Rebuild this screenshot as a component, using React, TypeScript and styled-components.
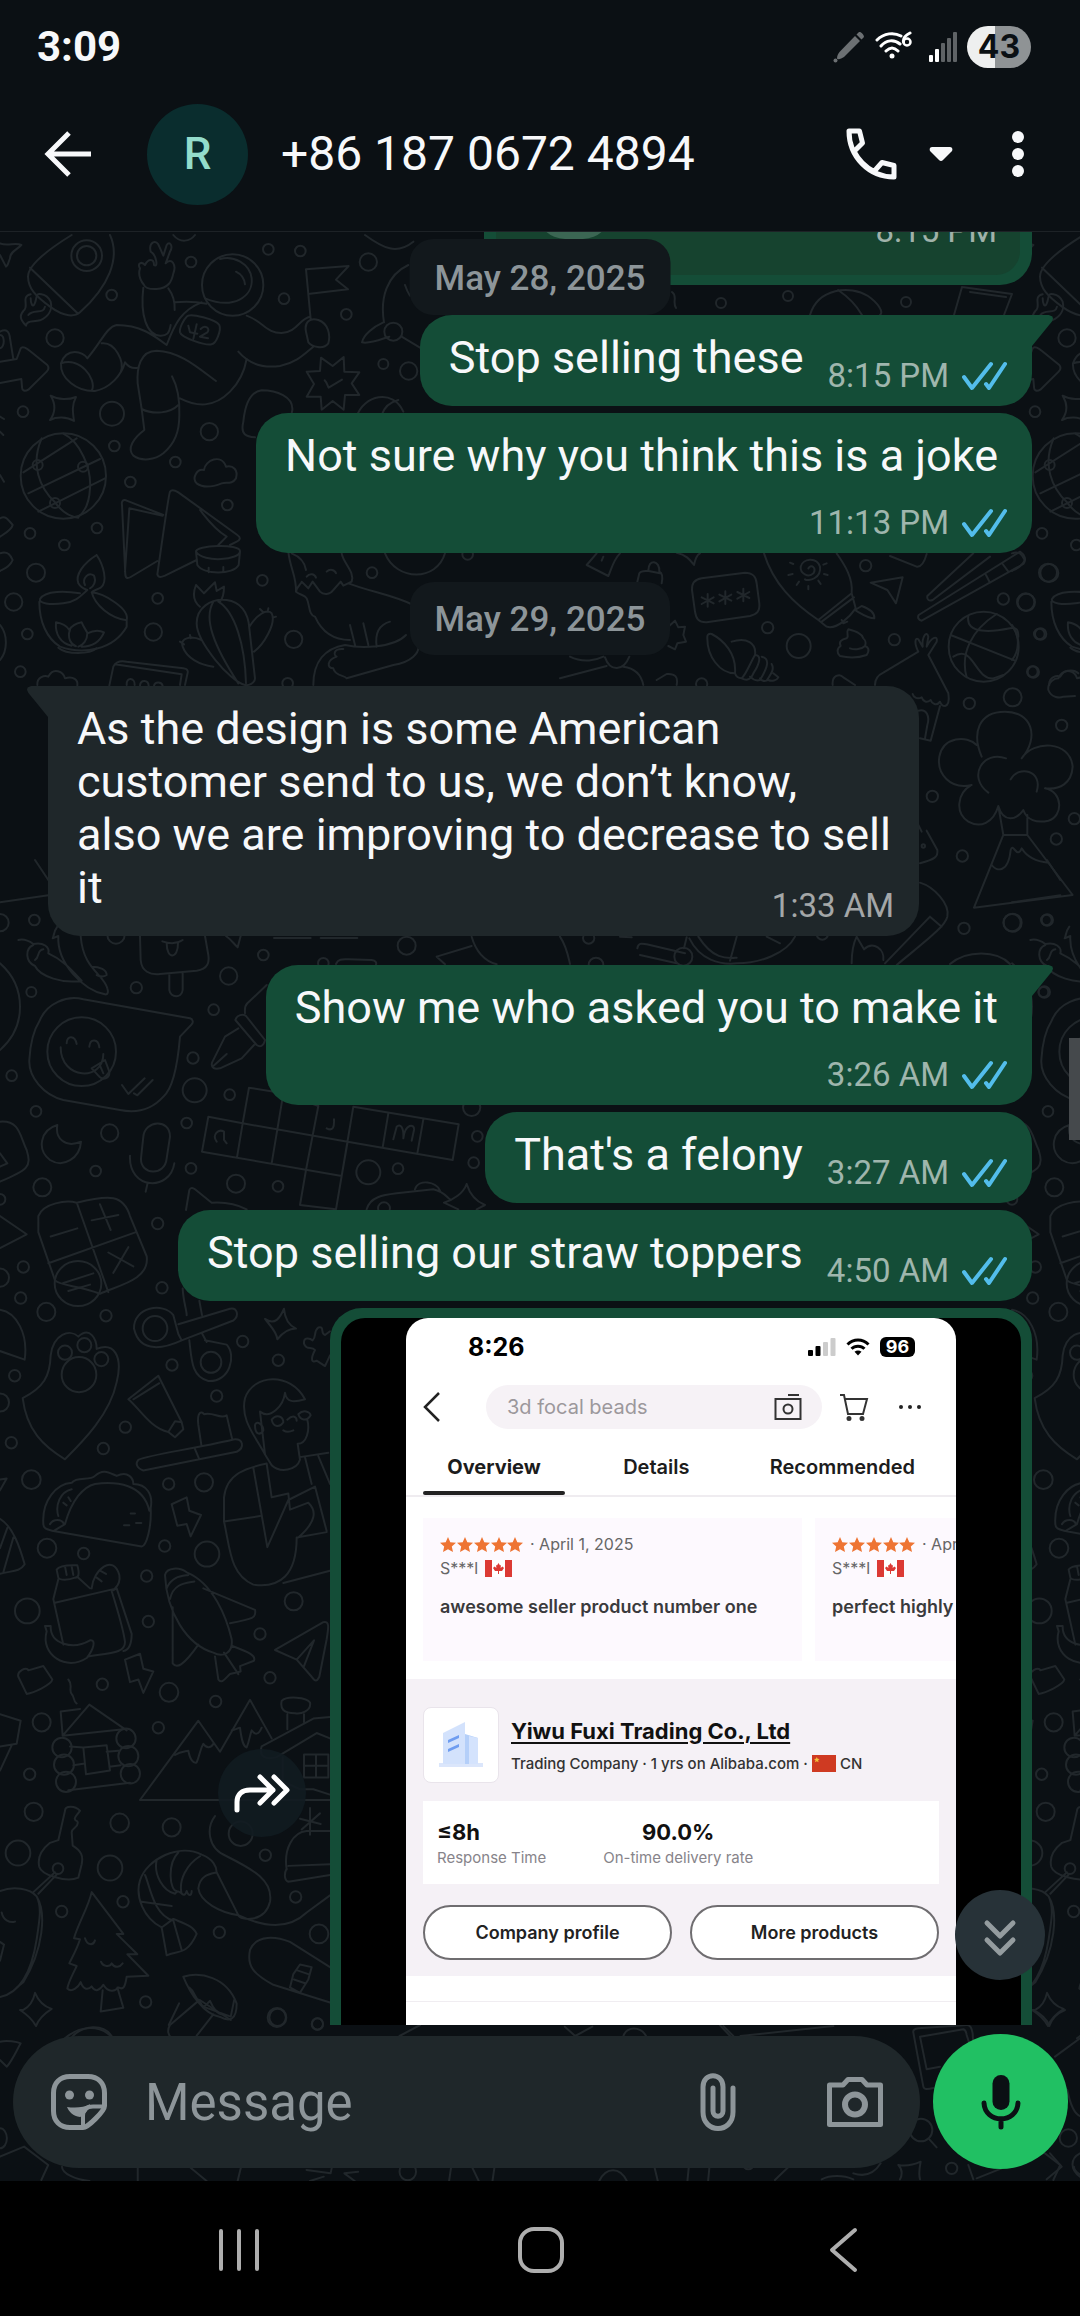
import React from "react";
import styled, { createGlobalStyle, css } from "styled-components";

const color = {
  base: "#0b1014",
  doodle: "#21272b",
  sent: "#144d37",
  sentInner: "#16432f",
  received: "#1f272a",
  chip: "#12181c",
  text: "#f7f8fa",
  muted: "#8d9599",
  accent: "#21c063",
  tick: "#53bdeb",
};

const GlobalStyle = createGlobalStyle`
  * { box-sizing: border-box; }
  body { margin: 0; background: #000; font-family: Roboto, "Noto Sans", sans-serif; }
  button, input { font: inherit; color: inherit; border: 0; padding: 0; background: none; outline: none; }
  svg { display: block; flex: none; }
  p { margin: 0; }
`;

const Screen = styled.div`
  display: flex;
  flex-direction: column;
  height: 100vh;
  background: ${color.base};
  color: ${color.text};
  overflow: hidden;
`;

const StatusBar = styled.div`
  flex: none;
  display: flex;
  align-items: center;
  height: 94px;
  padding: 0 49px 0 37px;
`;
const Clock = styled.time`
  flex: 1;
  font-size: 42px;
  font-weight: 700;
  line-height: 48px;
`;
const StatusIcons = styled.div`
  display: flex;
  align-items: center;
  gap: 10px;
`;
const Battery = styled.span`
  display: flex;
  align-items: center;
  justify-content: center;
  width: 64px;
  height: 42px;
  border-radius: 21px;
  background: linear-gradient(90deg, #eeefef 43%, #8f9395 43%);
  color: ${color.base};
  font: 700 32px/42px Inter, sans-serif;
`;

const Header = styled.header`
  flex: none;
  display: flex;
  align-items: center;
  height: 138px;
  padding: 0 42px 17px 38px;
  border-bottom: 1px solid #1d2226;
`;
const IconButton = styled.button<{ $w: number; $h?: number }>`
  flex: none;
  display: flex;
  align-items: center;
  justify-content: center;
  width: ${(p) => p.$w}px;
  height: ${(p) => p.$h ?? 60}px;
`;
const Avatar = styled.div`
  display: flex;
  align-items: center;
  justify-content: center;
  width: 101px;
  height: 101px;
  margin: 0 33px 0 49px;
  border-radius: 50%;
  background: #0a2d2e;
  color: #93dccb;
  font-size: 44px;
  font-weight: 500;
`;
const Title = styled.h1`
  flex: 1;
  margin: 0;
  font-size: 48px;
  font-weight: 400;
  line-height: 58px;
  white-space: nowrap;
`;
const HeaderActions = styled.div`
  display: flex;
  align-items: center;
  gap: 20px;
  & > :last-child { margin-left: 17px; }
`;

const Chat = styled.main`
  position: relative;
  flex: 1;
  min-height: 0;
  display: flex;
  flex-direction: column;
  isolation: isolate;
`;
const WallpaperSvg = styled.svg`
  position: absolute;
  inset: 0;
  width: 100%;
  height: 100%;
  z-index: -1;
  fill: none;
  stroke: ${color.doodle};
  stroke-width: 2;
  stroke-linecap: round;
  stroke-linejoin: round;
  path, circle, ellipse, rect { vector-effect: non-scaling-stroke; }
`;
const MessageList = styled.section`
  flex: 1;
  min-height: 0;
  overflow: hidden;
  display: flex;
  flex-direction: column;
  padding: 0 48px;
`;

const Bubble = styled.article<{ $from: "me" | "them"; $tail?: boolean; $inline?: boolean }>`
  position: relative;
  flex: none;
  display: flex;
  flex-direction: ${(p) => (p.$inline ? "row" : "column")};
  align-self: ${(p) => (p.$from === "me" ? "flex-end" : "flex-start")};
  align-items: flex-end;
  max-width: 871px;
  padding: 16px 25px ${(p) => (p.$inline ? 22 : 11)}px 29px;
  border-radius: 32px;
  background: ${(p) => (p.$from === "me" ? color.sent : color.received)};
  & + & { margin-top: 7px; }
  ${(p) =>
    p.$tail &&
    css`
      border-top-${p.$from === "me" ? "right" : "left"}-radius: 0;
      &::before {
        content: "";
        position: absolute;
        top: 0;
        ${p.$from === "me" ? "left" : "right"}: 100%;
        width: 21px;
        height: 31px;
        background: inherit;
        clip-path: ${p.$from === "me"
          ? "polygon(0 0, 80% 0, 97% 5%, 100% 12%, 94% 22%, 0 100%)"
          : "polygon(100% 0, 20% 0, 3% 5%, 0 12%, 6% 22%, 100% 100%)"};
      }
    `}
`;
const BubbleText = styled.p<{ $place: "inline" | "below" | "overlap" }>`
  align-self: flex-start;
  margin-right: ${(p) => ({ inline: 24, below: 9, overlap: 0 })[p.$place]}px;
  font-size: 45px;
  line-height: 53px;
  white-space: pre-line;
`;
const Meta = styled.footer<{ $place: "inline" | "below" | "overlap" }>`
  display: flex;
  align-items: center;
  gap: 12px;
  margin-top: ${(p) => ({ inline: 0, below: 21, overlap: -28 })[p.$place]}px;
  margin-bottom: ${(p) => (p.$place === "inline" ? -11 : 0)}px;
  font-size: 33px;
  line-height: 39px;
  white-space: nowrap;
  color: rgba(255, 255, 255, 0.6);
`;

const CutBubble = styled(Bubble)`
  width: 548px;
  height: 120px;
  margin: -67px 0 23px;
  padding: 10px 12px;
  align-items: stretch;
`;
const CutPreview = styled.div`
  flex: 1;
  display: flex;
  justify-content: space-between;
  align-items: center;
  padding: 6px 23px 6px 41px;
  border-radius: 24px;
  background: ${color.sentInner};
`;
const CutDot = styled.span`
  align-self: flex-start;
  width: 74px;
  height: 74px;
  margin-top: -16px;
  border-radius: 28px;
  background: #3b6653;
`;

const DateChip = styled.div<{ $floating?: boolean }>`
  flex: none;
  align-self: center;
  height: 73px;
  margin: 29px 0 31px;
  padding: 0 25px;
  border-radius: 24px;
  background: ${color.chip};
  color: ${color.muted};
  font-size: 35px;
  font-weight: 500;
  line-height: 76px;
  white-space: nowrap;
  ${(p) =>
    p.$floating &&
    css`
      position: absolute;
      top: 7px;
      left: 50%;
      margin: 0;
      height: 76px;
      line-height: 80px;
      transform: translateX(-50%);
      z-index: 1;
    `}
`;
const Gap = styled.div`
  flex: none;
  height: 29px;
`;

const PhotoRow = styled.div`
  flex: none;
  display: flex;
  justify-content: flex-end;
  align-items: center;
  gap: 24px;
  margin-top: 7px;
`;
const ForwardButton = styled.button`
  display: flex;
  align-items: center;
  justify-content: center;
  width: 88px;
  height: 88px;
  border-radius: 50%;
  background: rgba(17, 27, 33, 0.88);
`;
const PhotoBubble = styled.div`
  width: 702px;
  height: 970px;
  padding: 10px 11px;
  border-radius: 32px;
  background: ${color.sent};
`;
const Photo = styled.div`
  display: flex;
  justify-content: center;
  height: 100%;
  border-radius: 24px;
  overflow: hidden;
  background: #000;
  padding: 0 65px;
`;
const Shot = styled.div`
  flex: 1;
  min-width: 0;
  display: flex;
  flex-direction: column;
  overflow: hidden;
  border-radius: 22px 22px 0 0;
  background: #fff;
  color: #222;
  font-family: Inter, "Liberation Sans", sans-serif;
`;
const ShotStatus = styled.div`
  display: flex;
  align-items: center;
  gap: 10px;
  height: 58px;
  padding: 0 41px 0 62px;
`;
const ShotClock = styled.b`
  flex: 1;
  font-size: 25px;
  font-weight: 700;
  color: #000;
`;
const ShotBattery = styled.span`
  width: 35px;
  height: 20px;
  border-radius: 6px;
  background: #000;
  color: #fff;
  text-align: center;
  font-size: 18px;
  font-weight: 700;
  line-height: 20px;
`;
const ShotSearchRow = styled.div`
  display: flex;
  align-items: center;
  margin-top: 9px;
  padding: 0 34px 0 17px;
`;
const ShotSearch = styled.label`
  flex: 1;
  min-width: 0;
  display: flex;
  align-items: center;
  height: 44px;
  margin: 0 17px 0 45px;
  padding: 0 20px 0 21px;
  border-radius: 22px;
  background: #f6f2f6;
  input {
    flex: 1;
    min-width: 0;
    font-size: 20px;
    color: #9c989c;
  }
  input::placeholder { color: #9c989c; opacity: 1; }
`;
const ShotMore = styled(IconButton)`
  margin-left: 29px;
`;
const ShotTabs = styled.nav`
  flex: none;
  display: flex;
  justify-content: space-between;
  height: 68px;
  padding: 26px 25px 0 17px;
  border-bottom: 2px solid #efecf0;
`;
const ShotTab = styled.button<{ $active?: boolean }>`
  display: flex;
  flex-direction: column;
  justify-content: space-between;
  align-items: center;
  min-width: ${(p) => (p.$active ? 142 : 110)}px;
  padding: 0 ${(p) => (p.$active ? 0 : 16)}px;
  &:last-child { padding: 0 16px 0 22px; }
  font-size: 20px;
  font-weight: ${(p) => (p.$active ? 700 : 600)};
  line-height: 24px;
  color: #1c1c1c;
  &::after {
    content: "";
    width: 100%;
    height: 4px;
    border-radius: 2px;
    background: ${(p) => (p.$active ? "#222" : "transparent")};
  }
`;
const Reviews = styled.div`
  display: flex;
  gap: 13px;
  margin: 21px 0 18px 17px;
`;
const Review = styled.article`
  flex: none;
  width: 379px;
  height: 143px;
  padding: 16px 17px;
  background: #fdf9fe;
  white-space: nowrap;
`;
const ReviewLine = styled.div`
  display: flex;
  align-items: center;
  gap: 7px;
  height: 20px;
  margin-bottom: 4px;
  font-size: 16px;
  line-height: 20px;
  color: #666;
`;
const ReviewText = styled.p`
  margin-top: 17px;
  font-size: 18px;
  font-weight: 600;
  line-height: 24px;
  color: #3a3a3c;
`;
const Company = styled.section`
  flex: none;
  height: 297px;
  padding: 28px 17px 0;
  background: #f5f1f6;
`;
const CompanyHead = styled.div`
  display: flex;
  align-items: center;
  gap: 12px;
`;
const CompanyLogo = styled.div`
  display: flex;
  align-items: center;
  justify-content: center;
  width: 76px;
  height: 76px;
  border: 1px solid #e9e4eb;
  border-radius: 8px;
  background: #fff;
`;
const CompanyName = styled.a`
  display: block;
  margin-bottom: 9px;
  font-size: 22px;
  font-weight: 700;
  line-height: 28px;
  color: #111;
  text-decoration: underline;
  text-decoration-thickness: 2px;
  text-underline-offset: 3px;
`;
const CompanyInfo = styled.div`
  display: flex;
  align-items: center;
  gap: 4px;
  font-size: 15px;
  font-weight: 500;
  line-height: 20px;
  white-space: nowrap;
  color: #333;
`;
const Stats = styled.div`
  display: flex;
  gap: 57px;
  height: 83px;
  margin-top: 18px;
  padding: 19px 14px 0;
  background: #fff;
`;
const Stat = styled.div<{ $center?: boolean }>`
  text-align: ${(p) => (p.$center ? "center" : "left")};
  font-size: 15px;
  line-height: 20px;
  color: #87848a;
  b {
    display: block;
    margin-bottom: 4px;
    font-size: 22px;
    line-height: 24px;
    color: #111;
  }
`;
const CompanyButtons = styled.div`
  display: grid;
  grid-template-columns: 1fr 1fr;
  gap: 18px;
  margin-top: 21px;
  button {
    height: 55px;
    border: 2px solid #6f6d70;
    border-radius: 28px;
    background: #fff;
    font-size: 18px;
    font-weight: 600;
    color: #222;
  }
`;
const ShotRule = styled.hr`
  width: 100%;
  margin: 25px 0 0;
  border: 0;
  border-top: 1px solid #f0edf1;
`;

const ScrollThumb = styled.div`
  position: absolute;
  top: 806px;
  right: 0;
  width: 11px;
  height: 102px;
  background: #45494c;
`;
const JumpButton = styled.button`
  position: absolute;
  right: 35px;
  bottom: 201px;
  display: flex;
  align-items: center;
  justify-content: center;
  width: 90px;
  height: 90px;
  border-radius: 50%;
  background: #273238;
  && { padding-top: 6px; }
`;

const Composer = styled.form`
  flex: none;
  display: flex;
  align-items: center;
  gap: 13px;
  padding: 9px 12px 12px 13px;
`;
const ComposerField = styled.div`
  flex: 1;
  min-width: 0;
  display: flex;
  align-items: center;
  height: 132px;
  padding: 0 36px 0 37px;
  border-radius: 66px;
  background: ${color.received};
  color: ${color.muted};
  & > :last-child { margin-left: 79px; }
`;
const ComposerInput = styled.input`
  flex: 1;
  min-width: 0;
  margin-left: 37px;
  font-size: 51px;
  line-height: 60px;
  && { padding: 3px 0 0; }
  &::placeholder { color: ${color.muted}; opacity: 1; }
`;
const MicButton = styled.button`
  display: flex;
  align-items: center;
  justify-content: center;
  width: 135px;
  height: 135px;
  border-radius: 50%;
  background: ${color.accent};
  color: ${color.base};
`;

const SystemNav = styled.nav`
  flex: none;
  display: flex;
  align-items: center;
  justify-content: space-between;
  height: 135px;
  padding: 2px 207px 0 209px;
  background: #000;
  color: #aeaeae;
`;

function Ticks() {
  return (
    <svg width="46" height="30" viewBox="0 0 46 30" fill="none" stroke={color.tick} strokeWidth="4" strokeLinecap="round" strokeLinejoin="round" aria-label="Read">
      <path d="M3 16L11 27L30 3M25 23L28 27L44 3" />
    </svg>
  );
}

function Message({ from = "me", text, time, tail, place = "inline" }: {
  from?: "me" | "them";
  text: string;
  time: string;
  tail?: boolean;
  place?: "inline" | "below" | "overlap";
}) {
  return (
    <Bubble $from={from} $tail={tail} $inline={place === "inline"}>
      <BubbleText $place={place}>{text}</BubbleText>
      <Meta $place={place}>
        <time>{time}</time>
        {from === "me" && <Ticks />}
      </Meta>
    </Bubble>
  );
}

type Dot = [number, number, number];
const Dots = ({ list, sy = 1 }: { list: Dot[]; sy?: number }) => (
  <>
    {list.map(([x, y, r], i) => (
      <ellipse key={i} cx={x} cy={y} rx={r} ry={r * sy} />
    ))}
  </>
);

const spaceDots: Dot[] = [
  [260, 62, 46], [260, 62, 29], [573, 81, 16], [805, 43, 16], [901, 48, 16], [1105, 81, 26], [852, 191, 16],
  [1039, 238, 16], [335, 180, 16], [165, 309, 26], [1150, 387, 15], [1226, 408, 26], [69, 530, 16], [336, 536, 36],
  [628, 590, 26], [343, 633, 16], [526, 681, 16], [391, 741, 16], [682, 810, 16], [90, 895, 16], [291, 879, 16],
  [193, 930, 16], [108, 1013, 27], [41, 1101, 26], [473, 1090, 16], [787, 1036, 16], [82, 1197, 16],
  [460, 1191, 26], [881, 1213, 26], [1116, 1013, 16], [61, 1310, 16], [863, 1345, 16], [1403, 958, 16],
  [698, 150, 92], [190, 723, 128], [113, 690, 15], [249, 695, 15], [165, 804, 15], [1180, 290, 27],
];
const chatDots: Dot[] = [
  [0, 188, 26], [103, 180, 16], [94, 396, 15], [409, 383, 17], [686, 348, 26], [790, 285, 16], [641, 449, 16],
  [348, 225, 26], [579, 594, 17], [35, 647, 16], [584, 691, 36], [689, 704, 16], [108, 754, 16], [329, 819, 26],
  [560, 789, 16], [287, 933, 16], [573, 925, 16], [708, 971, 27], [834, 979, 16], [1105, 937, 36],
  [1194, 926, 16], [127, 982, 27], [0, 1018, 16], [1415, 742, 26], [1432, 829, 16], [1421, 908, 16],
  [1220, 257, 27], [245, 575, 103], [970, 310, 16], [1152, 1045, 18],
];
const campDots: Dot[] = [
  [473, 44, 17], [70, 125, 17], [62, 183, 17], [139, 209, 27], [318, 216, 17], [486, 164, 17], [44, 328, 17],
  [0, 145, 27], [0, 378, 27], [34, 453, 17], [376, 424, 17], [310, 464, 17], [94, 522, 28], [516, 308, 17],
  [728, 264, 17], [835, 299, 17], [650, 366, 17], [506, 530, 17], [612, 527, 27], [141, 650, 28], [251, 660, 17],
  [494, 646, 17], [621, 661, 37], [440, 702, 17], [445, 787, 17], [82, 767, 37], [881, 749, 27], [780, 810, 17],
  [810, 892, 17], [307, 904, 17], [507, 919, 28], [647, 936, 17], [125, 975, 27], [475, 985, 17], [89, 1072, 17],
  [101, 1142, 27], [54, 1219, 37], [359, 1163, 28], [330, 1247, 37], [515, 1171, 27], [722, 1183, 36],
  [796, 1223, 17], [887, 1301, 17], [185, 1328, 17], [369, 1310, 17], [658, 1367, 17], [957, 1370, 28],
  [437, 1497, 17], [831, 1526, 28], [952, 1538, 17], [195, 285, 21], [253, 271, 21], [304, 297, 21],
  [237, 326, 52], [465, 240, 37], [633, 303, 31], [186, 1022, 29], [192, 1054, 30], [198, 1086, 30],
  [378, 1005, 29], [385, 1038, 30], [391, 1071, 29], [174, 1248, 16],
];
const beachDots: Dot[] = [
  [917, 77, 17], [1468, 99, 27], [1330, 177, 17], [1399, 187, 26], [623, 263, 17], [716, 318, 36], [1003, 299, 17],
  [1442, 282, 17], [1420, 396, 17], [1228, 490, 17], [1358, 472, 27], [1505, 556, 17], [1117, 769, 17],
  [1543, 836, 17], [1489, 897, 17], [1207, 948, 17], [1212, 1165, 17], [1358, 1148, 27], [1462, 1140, 17],
  [1453, 1356, 17], [86, 1194, 17], [108, 1275, 22], [787, 1182, 17], [370, 1250, 27], [425, 432, 17],
  [1271, 320, 105], [1090, 918, 5],
];
const bottomDots: Dot[] = [[1285, 384, 26], [935, 475, 17], [843, 360, 34], [325, 462, 16]];

function LeftDoodles() {
  return (
    <g id="doodle-column">
      <g transform="translate(0 235) scale(0.33333)">
        <Dots list={spaceDots} />
        <path d="M330 0C362 70 325 155 240 232C225 245 195 248 150 215C105 182 85 160 84 125C84 90 150 40 215 0M90 98L232 234" />
        <path d="M92 178C60 185 90 215 70 228C55 245 65 258 78 272C80 255 100 262 120 256C145 245 158 225 152 200C146 188 135 180 125 178C105 172 112 190 104 206C98 220 92 205 92 190M85 240C100 220 130 240 135 215" />
        <path d="M0 25C25 35 45 20 64 30C50 45 30 50 30 70C25 80 25 92 18 95L0 60" />
        <path d="M0 380L50 372L62 340C68 332 80 340 90 348L142 390C148 398 146 404 140 410L85 464C75 470 65 468 66 455L64 432L0 444M0 290C20 280 28 290 30 310L40 372M0 340C15 335 15 300 0 300" />
        <path d="M432 150C420 135 415 115 420 100C410 85 425 78 435 90C445 70 462 70 462 90C475 100 470 60 452 50C445 20 470 10 478 35L490 62L500 30C510 15 520 35 510 50L497 85C515 65 530 90 520 115C515 140 505 160 470 162C450 163 435 158 432 150Z" />
        <path d="M430 158C420 240 440 300 480 302C500 303 508 295 512 270M505 160C520 180 525 200 524 225M524 202C560 198 600 202 620 206M615 190C700 225 760 185 755 130C750 85 700 60 660 72M708 110C725 118 733 130 735 148M605 202C545 225 525 265 500 330C460 300 420 270 350 270C320 275 305 320 262 370C250 350 200 335 183 385C180 430 230 470 285 468C330 460 365 420 375 382C385 395 400 402 415 398M183 385C240 365 290 430 276 466M305 325C345 320 375 380 362 412" />
        <path d="M740 242C790 260 800 295 845 294C890 292 900 250 930 245M715 350C745 385 790 400 840 393C890 383 915 355 940 335M932 252L918 103L1046 93L1008 134L1044 163L930 176M918 290C912 260 930 248 955 255C985 265 992 300 985 325C970 345 935 335 925 322Z" />
        <path d="M648 438C590 395 540 350 470 347C420 347 410 400 413 445L425 522L433 585C400 610 380 640 400 662C425 680 465 675 490 655C525 625 538 590 538 540C540 480 530 450 516 424M425 522C460 540 510 535 535 510M540 490C590 515 640 520 690 470C720 440 735 400 740 372" />
        <path d="M560 245C570 232 650 255 658 270C664 285 650 325 635 328C615 332 545 308 540 292C537 280 552 252 560 245Z" />
        <path d="M920 410L960 408L963 368L998 393L1031 366L1033 410L1078 412L1055 445L1078 480L1035 480L1031 524L998 498L965 524L962 485L920 485L942 447ZM974 436C980 442 982 450 986 458L1026 434" />
        <path d="M152 482C175 495 205 495 228 486C215 510 218 530 222 558C200 545 170 545 150 555C168 530 168 508 152 482Z" />
        <path d="M730 560C735 510 750 470 785 466C830 466 880 485 877 525L870 560M730 560C720 600 740 605 765 607M1070 545C1090 480 1180 460 1210 530M1145 540C1155 510 1175 500 1195 495" />
        <path d="M125 610C90 690 120 760 165 802C185 830 205 845 235 848M190 596C240 620 275 700 270 760C268 800 255 830 235 846M70 712L230 610M85 775L300 672M115 830L315 730" />
        <path d="M590 745C575 730 590 700 612 705C615 675 665 655 678 695C700 690 715 705 708 730C695 750 680 740 665 745C640 755 610 760 590 745Z" />
        <path d="M490 840L378 796C368 793 364 800 366 810L376 1020C378 1032 385 1030 392 1026L472 978M388 820L375 1010M388 820L488 842M510 770C505 780 475 1000 472 1018C475 1030 485 1026 495 1022L590 975M510 770C515 762 525 766 535 772L712 900C724 908 720 915 710 920L690 930M600 825C620 850 640 880 680 905L655 930" />
        <path d="M588 950C585 930 720 925 720 948C722 975 610 985 588 950ZM588 950L592 990C610 1020 700 1020 716 990L720 950M626 998V1012M670 996V1010" />
        <path d="M290 960C250 985 225 1020 235 1045C245 1062 255 1062 262 1065C245 1080 230 1100 190 1105C150 1110 115 1105 120 1092C135 1065 200 1068 240 1075M290 960C310 990 325 1040 302 1058C290 1065 280 1065 275 1072C285 1110 330 1150 380 1156M380 1156C390 1120 310 1075 275 1072M118 1100C118 1160 140 1210 180 1235C250 1260 340 1245 380 1175V1156M255 1050C245 1030 265 1010 282 1022C290 1040 280 1055 270 1060" />
        <path d="M215 1232C180 1225 165 1195 168 1162C185 1165 200 1172 208 1185C215 1172 230 1165 245 1162C252 1180 262 1190 262 1195C280 1186 300 1186 312 1192C300 1220 275 1235 245 1235M210 1185C200 1210 215 1230 228 1234M262 1195C262 1215 250 1230 235 1235M175 1238C200 1260 270 1258 290 1240" />
        <path d="M600 1115C575 1095 580 1070 588 1050L612 1075L645 1042L650 1068L672 1055C672 1080 668 1090 660 1100M735 1350C690 1340 590 1220 590 1165C590 1120 630 1090 680 1095C720 1100 745 1130 748 1180L765 1330C765 1345 745 1352 735 1350ZM640 1100C610 1150 640 1230 715 1345M655 1100C705 1130 735 1230 738 1345M748 1175C770 1140 800 1120 815 1135C830 1165 790 1230 762 1250M605 1215C570 1200 540 1210 548 1235C560 1270 600 1290 640 1295M540 1220L552 1228M570 1200L572 1210M780 1122L790 1132M805 1120L803 1130M828 1145L818 1148" />
        <path d="M112 1350C110 1325 135 1320 145 1325C160 1295 190 1310 195 1330C220 1322 235 1335 232 1352M328 1352L340 1295C350 1275 370 1278 380 1280L550 1300C565 1302 565 1310 562 1318L555 1350M345 1288L545 1318L540 1350M380 1350C378 1325 405 1328 404 1350M420 1352C422 1332 445 1335 446 1352M462 1352C465 1338 485 1340 488 1352" />
        <path d="M865 950C870 1000 890 1025 888 1070C900 1080 915 1080 920 1090C930 1110 925 1140 945 1145C965 1190 1000 1215 1050 1215M875 955C900 965 915 985 918 1005M888 1070C890 1055 905 1045 905 1040L925 1060L938 1040L960 1070C970 1080 990 1080 1000 1065L1022 1040L1030 1052L1055 1040C1065 1010 1030 985 1025 955M920 1025C930 1012 945 1018 948 1028M980 1010C990 1000 1005 1005 1008 1015M1045 1045C1110 1070 1180 1080 1240 1110M1050 1170L1065 1230M1090 1165L1105 1230M1170 1160C1135 1170 1125 1200 1130 1235M940 1350C940 1280 975 1240 1035 1230C1080 1240 1180 1240 1218 1200M1030 1242C1000 1240 1000 1260 1010 1265C980 1275 980 1300 1000 1300C1005 1325 1035 1320 1040 1330L1180 1290C1240 1280 1255 1250 1255 1240M1155 955C1190 1040 1310 1040 1335 955" />
        <path d="M1225 90C1160 120 1140 190 1152 262M1150 262C1120 275 1090 300 1086 322C1110 328 1150 310 1168 305M1205 305L1260 338M1215 150C1220 165 1225 175 1230 182M1095 0C1150 40 1190 60 1240 20M520 0C540 25 570 20 585 0" />
        <path d="M0 850C15 842 22 850 38 870C35 885 15 895 0 905M0 955C20 948 30 955 38 975C30 995 15 1000 0 1008M0 545L12 552M0 590L10 600M0 1170C25 1200 22 1250 0 1275M0 720L12 740M565 272L570 292L592 296M590 268L580 312M602 282C615 268 632 280 622 292L600 305L624 310" />
      </g>
      <g transform="translate(0 860) scale(0.33333)">
        <Dots list={chatDots} />
        <path d="M0 127L145 106M105 0L145 60M0 310C80 380 80 500 0 570" />
        <path d="M55 240C75 235 90 245 100 252C130 245 150 262 145 280C190 300 215 330 245 362C190 372 120 350 105 318C75 305 75 265 100 255M130 268C110 270 120 290 105 300M172 200C160 215 162 230 158 235L175 228C170 310 250 390 315 403C325 405 325 395 322 385C310 340 250 330 242 228M275 320C300 320 320 330 320 345C310 352 300 350 290 345" />
        <path d="M420 228L422 300C425 335 450 345 480 342L590 332C625 328 628 305 625 285L615 228M508 340V390C512 415 545 415 548 390V338M487 244C510 252 530 252 548 240M500 250C500 300 535 298 534 248M678 228C695 240 700 250 713 262L722 228" />
        <path d="M120 480C140 430 200 405 250 418L570 475C580 478 580 488 575 493L540 530C535 590 525 680 490 710C450 755 400 758 360 750L190 720C130 705 85 650 88 600C90 560 95 520 120 480ZM182 562C182 660 310 665 310 582M200 550C200 525 225 525 230 552M268 560C270 535 295 535 298 562M275 625L315 600L328 635C330 655 310 660 300 652ZM300 617L310 640M366 675L385 702L434 655M402 700L412 706L458 660" />
        <path d="M800 375L742 430C732 440 735 450 735 460M706 480C710 465 730 460 738 468L795 540C790 560 780 562 770 555ZM715 505L675 530L636 608C632 625 645 628 660 625L725 595L762 555M640 618L680 582" />
        <path d="M172 795C120 810 110 870 150 900C190 925 240 895 243 845C195 865 165 835 172 795ZM430 830C435 780 510 775 510 830L500 895C495 950 420 945 423 895ZM390 887C385 990 510 995 523 910M443 968L437 995M0 785C60 780 60 830 80 870C95 920 85 930 0 965M0 880L22 910L0 920" />
        <path d="M747 683L728 790L625 770L606 875L1025 948L1043 845L1358 900L1376 793L1060 740M747 683L850 700L815 910M728 790L1043 845M728 790L711 892M955 738L918 930M1060 740L1025 948L1008 1048M918 930L900 1035L1008 1048M1165 760L1148 862M1270 778L1252 880M850 700L955 738" />
        <path d="M558 1050L568 990C572 980 580 984 585 988L635 1028C680 1025 715 1035 740 1048M1100 1048C1110 1010 1150 1005 1190 1000L1300 988C1330 995 1340 1010 1350 1018M1245 988C1255 955 1310 965 1320 992M1400 972C1390 1000 1360 1020 1332 1028L1375 1048M1400 972C1410 1005 1430 1025 1455 1035L1430 1048" />
        <path d="M650 845C635 825 655 805 672 815V840L680 850M980 805C1000 815 1003 800 1002 778M1180 838L1190 800C1200 790 1212 800 1210 835C1215 790 1245 790 1242 810L1235 842M1008 312C1015 295 1030 298 1045 298L1115 300C1128 302 1130 308 1128 314M1310 290L1415 258M1415 230C1425 265 1445 300 1490 313M1310 290L1335 313M822 234H932M962 234H1072" />
      </g>
      <g transform="translate(0 1200) scale(0.33333 0.5357)">
        <Dots list={campDots} sy={0.63} />
        <path d="M115 30C130 5 200 0 230 5C330 -10 370 -10 390 30L440 105C450 150 350 160 300 175C240 160 180 160 165 150L115 60ZM232 8L325 172M145 118L408 60M152 68L232 53M275 38L355 28M300 8L332 56M325 98L400 124M340 136L385 88M190 155L280 137M205 170L270 158" />
        <ellipse cx="234" cy="156" rx="70" ry="42" />
        <path d="M0 30L80 64L0 90M0 205C50 210 85 250 74 298L0 282M195 484C130 460 80 430 68 370C130 350 150 330 152 290C160 250 210 240 235 255C270 235 290 260 290 278C340 265 370 290 350 340C330 400 250 450 195 484Z" />
        <path d="M548 165C550 190 560 205 560 215M598 188L606 215M545 262C500 275 420 290 402 240C400 200 490 190 520 215L535 250L545 262L700 225C720 215 710 200 690 203L535 232M568 262C575 300 575 330 625 338C690 340 710 290 680 270L615 262M605 248L620 265M385 372L475 328L545 415L550 428L525 443L505 433C450 425 420 390 385 372ZM400 372L478 342M505 433L525 413L545 415" />
        <path d="M415 485C450 475 580 465 700 447C730 445 735 462 710 470L430 505C410 500 405 492 415 485ZM585 465L598 484M604 457L595 420C590 395 605 393 612 400C640 395 660 410 680 402L696 445" />
        <path d="M795 475L780 395C810 410 850 385 855 360C860 378 880 378 915 372C870 320 760 325 735 370C720 410 765 440 795 475L815 495C840 510 890 505 900 485L893 455C920 455 930 430 922 410M765 420C770 410 790 420 790 430C780 440 765 438 765 420ZM815 410C830 398 850 405 850 415C840 425 820 425 815 410ZM862 410C880 400 890 405 890 412M895 400C910 390 930 395 932 402C920 415 900 410 895 400ZM850 430C860 434 870 433 880 430M800 492C740 500 680 510 672 555V600L780 590M672 600C690 650 690 700 760 718C840 725 890 700 890 630L980 620M760 500L802 648L865 560L945 535L980 618M800 492L815 555L865 548M865 548L870 578L925 565C950 580 950 600 895 630M900 480L985 472M915 480L935 530M955 478L990 530M850 715L990 692" />
        <path d="M795 222C825 235 840 220 852 203C855 225 870 235 888 240C865 240 845 250 832 260C830 245 810 235 795 222ZM912 268C910 255 930 258 938 262C950 255 940 245 955 238C975 235 960 250 975 252L990 245M912 268C920 282 935 272 945 280C930 298 935 305 950 300L975 310L990 290" />
        <path d="M130 605C125 560 170 530 215 528C230 515 270 525 285 515C310 500 330 510 350 515C385 505 400 520 400 530C440 530 460 550 452 575C455 610 440 645 425 647L160 618C145 615 130 615 130 605ZM160 618L195 605C215 560 250 535 285 530C350 525 430 530 448 580M150 605C160 595 185 595 192 605M215 540C180 545 165 570 175 590M190 565L200 570M205 555L212 562M372 607H388M408 603H424M392 585H405" />
        <path d="M515 568L560 555L568 580L603 588L572 628L560 605L532 608ZM0 595C40 610 60 650 74 680C60 695 30 692 0 698M22 612L0 650M40 630L10 695M0 522L20 520L0 542" />
        <path d="M170 690C180 680 220 682 232 682C240 700 235 705 225 705C205 710 180 710 175 705ZM195 684L200 700M215 684L220 700M175 708L160 745L190 830M235 705L270 725M165 752L350 725L335 730C350 760 370 800 375 825C375 845 340 845 265 852M350 725L395 810C395 830 385 840 370 842M275 725C280 690 340 660 358 700C362 715 350 722 345 725M290 705L305 712M300 692L318 698M135 795H152C150 830 220 840 270 822C290 820 280 840 260 855C200 880 120 850 140 805Z" />
        <path d="M495 700C500 685 540 685 560 695C640 715 680 780 695 820C700 845 670 855 640 845C560 830 500 770 495 700ZM510 745C520 715 560 715 583 712M500 725C515 702 545 702 565 700M610 725L765 765C770 780 760 782 690 790M518 760V865C530 875 550 870 595 830M645 852L655 895C665 905 680 890 690 885L722 880L720 870L762 860C768 850 750 845 695 832M672 845L715 885M825 840L970 788C990 785 985 800 980 820L958 890C950 900 945 898 935 890L890 858ZM890 858L942 822L912 870" />
        <path d="M55 890C50 880 80 870 85 878L130 870L157 895C155 905 100 920 80 922ZM375 858L420 847L430 875L460 880L430 920L415 895L390 900ZM205 895C220 905 205 915 215 922C225 928 218 935 230 940M188 1000L182 955L240 950M188 1000L268 942L380 990M188 1000L370 988M250 1022L320 1018L330 1065L258 1072ZM210 1020L250 1022M220 1055L255 1052M320 1030L355 1028M328 1058L362 1055M205 1102L390 1088M0 960L62 972L50 1015L0 1020M35 1018L0 1065" />
        <path d="M420 1120L595 972L660 1030L750 933L815 1005M420 1120H990M525 1036C540 1030 550 1030 565 1028C570 1045 580 1052 590 1050C600 1035 600 1025 610 1015C620 1025 635 1022 640 1015M695 990C705 990 715 985 720 985C725 1010 730 1020 740 1022C748 1010 750 998 755 990C765 998 775 1000 785 985M845 935C860 925 920 928 930 938C935 955 900 960 885 958C850 958 840 950 845 935ZM862 960V988M912 960V975M785 1020L940 968L990 965M785 1020C775 1040 800 1045 830 1040L950 995L990 1005M848 1040V1085M912 1035H985V1078H912ZM948 1035V1078M912 1056H985M848 1085L900 1100H940L990 1110" />
        <path d="M195 1140C195 1130 225 1130 240 1140C230 1150 215 1155 232 1160C240 1170 215 1172 215 1180L218 1205C245 1215 250 1225 245 1240L235 1265C200 1275 125 1260 118 1245C110 1225 130 1210 150 1200L175 1195ZM165 1255L100 1292M172 1258L115 1295M0 1290C40 1280 90 1285 110 1300C125 1320 120 1340 110 1380C95 1440 60 1480 0 1488M110 1300C140 1330 130 1400 70 1460L50 1470M5 1330C10 1345 30 1350 45 1347M0 1385L12 1390L0 1420M70 1512C90 1505 100 1495 105 1480C115 1495 130 1505 155 1510C130 1520 115 1530 108 1542C98 1530 80 1520 60 1512Z" />
        <path d="M275 1292C265 1320 235 1350 222 1378L240 1380C230 1400 215 1415 208 1425L230 1430C215 1450 205 1460 202 1472C215 1480 235 1470 242 1460C250 1475 265 1475 275 1468C285 1480 300 1475 310 1465C325 1480 345 1478 355 1470C370 1475 375 1470 380 1450L445 1448L382 1408L412 1408L350 1370H370ZM255 1378C262 1392 280 1392 285 1382M303 1422C310 1432 330 1432 335 1425C345 1435 360 1432 368 1425M308 1475L302 1515L370 1508L352 1470" />
        <path d="M485 1358C430 1340 405 1300 420 1270C440 1230 540 1200 605 1222C640 1230 650 1245 650 1255L715 1335C660 1330 600 1310 595 1285C600 1260 630 1258 650 1255M520 1345C460 1335 450 1280 435 1260M425 1310L515 1318M470 1232C460 1260 490 1290 525 1295M535 1218C500 1240 510 1290 530 1290M600 1225C560 1240 535 1270 545 1295M525 1295C540 1280 550 1310 560 1290C565 1300 575 1300 575 1290M485 1358L500 1410C530 1400 560 1412 590 1370C580 1355 550 1350 520 1342ZM520 1345L545 1400M645 1150C620 1170 620 1210 680 1225C760 1250 820 1270 810 1310C795 1350 720 1345 715 1335M715 1335C800 1360 870 1360 920 1330L990 1298" />
        <path d="M860 1250C850 1210 880 1180 920 1178H990M860 1248C850 1260 855 1275 870 1272L990 1260M865 1243L990 1240M900 1155L962 1165M930 1135V1185M905 1175L960 1145M750 1400C770 1370 830 1375 870 1385L990 1432M750 1400C740 1430 760 1445 820 1465L990 1498M880 1445L900 1427L935 1432L925 1455L900 1480L870 1470ZM892 1438L925 1445M882 1455L915 1462" />
        <path d="M550 1450C600 1440 680 1450 710 1500C710 1530 690 1535 660 1525C610 1520 570 1480 550 1450ZM568 1470C590 1480 580 1490 600 1495C610 1515 620 1500 630 1495C640 1510 655 1520 665 1520M595 1495L510 1540C500 1550 505 1560 515 1565M640 1520L590 1560" />
        <path d="M195 1565C240 1540 300 1540 335 1562" />
      </g>
      <g transform="translate(0 2000) scale(0.6888 0.33333)">
        <path d="M245 75L260 10M335 60L290 0M0 125C10 120 25 125 30 130C22 160 18 180 10 200L0 180M105 110C120 75 150 70 162 108M295 20L335 50L340 0M35 440L70 495L60 540M0 470L35 440M90 500C90 520 110 540 130 543M200 500V543M275 500L300 543M350 500L345 543M445 510L480 520L482 500M450 543L470 530M520 515L500 520L515 543M655 500L652 543M685 500L695 543M718 500L715 543M870 543C880 500 900 500 910 543M950 500L955 543M1000 500L998 543M1030 500L1028 543M1125 540L1145 500" />
        <ellipse cx="403" cy="52" rx="12" ry="26" />
        <ellipse cx="461" cy="72" rx="8" ry="17" />
        <ellipse cx="592" cy="515" rx="12" ry="26" />
        <ellipse cx="0" cy="415" rx="10" ry="30" />
        <path d="M580 108L610 75M820 80L835 108L860 80M905 108C910 78 930 78 938 108M1045 75L1060 108M1075 108L1210 78" />
      </g>
    </g>
  );
}

function Wallpaper() {
  return (
    <WallpaperSvg viewBox="0 232 1080 1949" preserveAspectRatio="xMidYMin slice" aria-hidden="true">
      <LeftDoodles />
      <use href="#doodle-column" x="1012" />
      <g transform="translate(560 540) scale(0.33333)">
        <Dots list={beachDots} />
        <path d="M80 75L110 40M80 75L145 108C155 85 160 60 180 40M130 50L125 62M350 38C380 45 390 60 402 75C405 60 410 45 420 40M232 125L238 100C245 90 260 95 265 92C265 55 300 60 298 95C310 100 308 115 305 130M262 92L300 100" />
        <path d="M425 115L555 98C580 98 588 110 590 130L598 190C600 215 590 222 570 228L440 247C415 248 408 235 405 215L396 150C395 130 405 118 425 115ZM443 162V200M425 172L461 190M425 192L461 172M496 154V192M478 164L514 182M478 184L514 164M550 146V184M532 156L568 174M532 176L568 156" />
        <path d="M612 40C640 130 700 190 775 240L875 160C880 110 850 70 830 40M775 240L800 260C830 270 870 230 887 205L875 160M785 245L882 172M845 240L850 250L862 245M885 210L905 198C925 205 945 215 943 235C925 235 910 225 888 212M745 85C755 70 770 85 760 100C745 115 720 100 722 80C728 55 770 50 780 80C785 115 745 125 735 118M690 68L700 72M685 105L698 102M710 135L717 125M745 148V138M782 132L775 122M803 105L792 102M800 70L790 74" />
        <path d="M932 128L1028 112L1008 190L982 150ZM1240 40L1102 168C1100 180 1108 184 1118 180L1290 50M1380 35C1395 45 1400 60 1390 72L1085 242C1075 240 1072 232 1076 225ZM1328 72L1345 95M1278 105L1290 128M990 48L1070 80C1085 82 1095 60 1100 42" />
        <path d="M442 290C440 350 480 400 525 400C530 340 490 300 455 282C445 280 442 285 442 290ZM515 305C560 290 590 310 585 345C570 370 560 400 545 415C535 415 528 410 525 400M585 345C605 345 600 370 580 400C570 425 555 420 545 415M605 350C630 355 625 380 600 420C585 425 575 415 570 410M635 372C645 390 630 405 620 422C610 425 602 420 600 415M640 400L655 412C650 422 635 425 625 420" />
        <path d="M865 268C855 280 870 285 860 295C845 298 835 305 842 318C830 325 830 340 840 348C870 355 900 352 920 345C930 330 925 322 915 318C920 305 915 300 910 295C905 280 890 275 865 268ZM915 318C905 328 885 330 870 325" />
        <path d="M945 435C945 415 955 405 970 398L1075 335C1062 310 1065 290 1075 298L1088 320C1085 290 1100 270 1105 290L1100 320C1115 290 1135 285 1130 305L1105 345L1165 460C1168 480 1165 495 1155 498C1145 498 1142 490 1140 485C1130 500 1115 490 1112 480C1100 490 1090 485 1085 472C1070 480 1060 470 1058 462M1140 498L1112 602L1080 595M1075 512C1100 505 1110 530 1102 555L1095 595" />
        <path d="M1225 228C1215 285 1300 275 1350 265C1370 262 1375 268 1375 290M1310 222C1235 270 1200 340 1220 412M1172 285L1365 362M1180 350C1240 310 1245 420 1300 415L1330 405" />
        <path d="M1265 650C1235 580 1255 515 1335 515C1415 515 1440 590 1385 655C1420 600 1530 600 1538 680C1535 730 1500 750 1455 745C1510 755 1510 830 1465 842C1430 850 1400 840 1390 810C1370 840 1330 850 1315 798C1300 850 1260 865 1225 845C1185 820 1190 760 1235 735C1170 750 1130 700 1138 650C1150 590 1220 585 1250 615M1338 655C1270 630 1220 710 1285 758M1352 718C1375 675 1450 690 1430 755M1315 798L1330 885H1402V825M1330 885L1242 1103L1538 1065L1402 885M1295 975C1310 995 1345 1000 1352 930C1360 905 1370 960 1385 925C1400 950 1430 965 1465 968" />
        <path d="M1100 872L1132 930C1135 950 1125 958 1080 970M1075 855L1085 875M1080 1028C1120 1040 1170 1090 1162 1130C1155 1160 1100 1200 1010 1275M1110 1130L1145 1160M1110 1130L975 1270M875 1270C875 1230 880 1210 890 1190L912 1228C940 1200 975 1230 970 1260M1170 1272C1220 1230 1310 1230 1350 1272" />
        <path d="M232 1225C235 1205 250 1212 260 1213L375 1240M240 1245L350 1270M180 1190L215 1192M380 1192L372 1225M388 1195C420 1260 480 1275 530 1270C600 1270 680 1240 705 1190M415 1190C460 1260 500 1255 530 1253M530 1190L510 1262M620 1190L660 1210M0 1190C20 1220 25 1250 30 1272" />
        <path d="M325 260L345 242L355 262L375 260L370 285L378 305L352 310L345 328L325 318M30 350C70 370 110 360 130 350M0 415L140 378M135 352C150 395 190 395 208 350M190 380C230 385 245 410 250 435M290 420L320 402C345 400 355 410 350 435M818 435C815 405 840 400 850 412L885 435M1465 450C1462 425 1485 415 1495 415C1505 390 1540 385 1555 400M1465 450C1475 475 1500 475 1510 470L1545 468" />
      </g>
      <g>
        <circle cx="721" cy="303" r="5" />
        <circle cx="788" cy="296" r="5" />
        <circle cx="906" cy="302" r="5" />
        <path d="M672 292C678 296 672 302 676 308M810 315C818 288 850 285 868 296C878 303 884 312 880 315M838 290C850 298 858 308 862 315M962 287L954 315M962 287L1012 294L1004 315M970 292L1006 297" />
      </g>
      <g transform="translate(640 2010) scale(0.33333)">
        <Dots list={bottomDots} />
        <path d="M820 68C818 60 825 56 835 55L980 45C992 44 995 55 998 70L1000 110M820 68L850 230C852 240 865 238 880 234M840 80L970 58C978 60 978 65 980 75L988 100M840 80L860 178L900 170M868 388L890 412M775 465C800 470 820 465 842 455C838 475 835 490 840 508M775 465C790 480 785 500 780 508M985 465L1000 508M1010 505L1085 475M1230 430L1265 470L1220 508M1320 430C1290 445 1290 480 1320 500M1320 85L1245 140M1282 240C1290 280 1300 310 1320 318M1180 0C1200 10 1220 25 1228 48C1235 25 1250 10 1275 0M545 508C570 495 610 495 640 508M640 490C670 500 700 495 722 460M250 48L280 78" />
      </g>
    </WallpaperSvg>
  );
}

const starPath = "M8 0L10.3 5.2L16 5.8L11.8 9.6L13 15L8 12.2L3 15L4.2 9.6L0 5.8L5.7 5.2Z";

function Stars() {
  return (
    <svg width="83" height="15" viewBox="0 0 83 15" fill="#ee7433" aria-label="5 stars">
      {[0, 17, 34, 51, 67].map((x) => (
        <path key={x} d={starPath} transform={`translate(${x} 0)`} />
      ))}
    </svg>
  );
}

function CanadaFlag() {
  return (
    <svg width="27" height="17" viewBox="0 0 27 17" aria-label="Canada">
      <rect width="27" height="17" fill="#fff" />
      <path fill="#dc3a34" d="M0 0H7V17H0ZM20 0H27V17H20ZM13.5 3L15 5.5L16 5L15.6 8L17.5 6.5L19 8L17 11H14V14H13V11H10L8 8L9.500 6.500L11.400 8L11 5L12 5.500Z" />
    </svg>
  );
}

function ReviewCard({ date, text }: { date: string; text: string }) {
  return (
    <Review>
      <ReviewLine><Stars /><span>· {date}</span></ReviewLine>
      <ReviewLine><span>S***l</span><CanadaFlag /></ReviewLine>
      <ReviewText>{text}</ReviewText>
    </Review>
  );
}

function SharedScreenshot() {
  return (
    <Photo>
      <Shot>
        <ShotStatus>
          <ShotClock>8:26</ShotClock>
          <svg width="28" height="18" viewBox="0 0 28 18">
            <rect x="0" y="12" width="5" height="6" rx="1" />
            <rect x="7.500" y="8" width="5" height="10" rx="1" />
            <rect x="15" y="4" width="5" height="14" rx="1" fill="#ccc" />
            <rect x="22.500" y="0" width="5" height="18" rx="1" fill="#ccc" />
          </svg>
          <svg width="24" height="18" viewBox="0 0 24 18" fill="none" stroke="#000" strokeWidth="3">
            <path d="M1.500 6.500C7.500 .5 16.500 .5 22.500 6.500M5.500 10.800C9 7.300 15 7.300 18.500 10.800" />
            <path d="M12 17.500L8.500 13.800C10.500 12 13.500 12 15.500 13.800Z" fill="#000" stroke="none" />
          </svg>
          <ShotBattery>96</ShotBattery>
        </ShotStatus>
        <ShotSearchRow>
          <IconButton $w={18} $h={44} aria-label="Back">
            <svg width="18" height="30" viewBox="0 0 18 30" fill="none" stroke="#222" strokeWidth="2.500">
              <path d="M16 1L2 15L16 29" />
            </svg>
          </IconButton>
          <ShotSearch>
            <input aria-label="Search products" placeholder="3d focal beads" />
            <svg width="28" height="28" viewBox="0 0 28 28" fill="none" stroke="#333" strokeWidth="2">
              <path d="M1.500 6H26.500V26H1.500ZM14 2H25" />
              <circle cx="14" cy="16" r="4.500" />
            </svg>
          </ShotSearch>
          <IconButton $w={30} $h={44} aria-label="Cart">
            <svg width="30" height="28" viewBox="0 0 30 28" fill="none" stroke="#333" strokeWidth="2">
              <path d="M1 2H5L9 21H24L28 6H6" />
              <circle cx="10" cy="25.500" r="1.500" fill="#333" />
              <circle cx="23" cy="25.500" r="1.500" fill="#333" />
            </svg>
          </IconButton>
          <ShotMore $w={24} $h={44} aria-label="More">
            <svg width="24" height="6" viewBox="0 0 24 6" fill="#222">
              <circle cx="3" cy="3" r="2" />
              <circle cx="12" cy="3" r="2" />
              <circle cx="21" cy="3" r="2" />
            </svg>
          </ShotMore>
        </ShotSearchRow>
        <ShotTabs>
          <ShotTab $active>Overview</ShotTab>
          <ShotTab>Details</ShotTab>
          <ShotTab>Recommended</ShotTab>
        </ShotTabs>
        <Reviews>
          <ReviewCard date="April 1, 2025" text="awesome seller product number one" />
          <ReviewCard date="April 1, 2025" text="perfect highly" />
        </Reviews>
        <Company>
          <CompanyHead>
            <CompanyLogo>
              <svg width="44" height="50" viewBox="0 0 44 50">
                <path d="M0 43H44V47H0Z" fill="#dbe6fb" />
                <path d="M4 13L26 2V44H4Z" fill="#d3e2fc" />
                <path d="M26 14L39 18V44H26Z" fill="#b4cff9" />
                <path d="M30 16L39 18V44H30Z" fill="#d4e3fd" />
                <path d="M9 20L20 15V18L9 23ZM9 29L20 24V27L9 32Z" fill="#6f9df0" />
              </svg>
            </CompanyLogo>
            <div>
              <CompanyName href="#company">Yiwu Fuxi Trading Co., Ltd</CompanyName>
              <CompanyInfo>
                <span>Trading Company · 1 yrs on Alibaba.com ·</span>
                <svg width="24" height="17" viewBox="0 0 24 17" aria-label="China">
                  <rect width="24" height="17" fill="#cf3a22" />
                  <path d={starPath} transform="translate(2 2) scale(.35)" fill="#f3c33c" />
                </svg>
                <span>CN</span>
              </CompanyInfo>
            </div>
          </CompanyHead>
          <Stats>
            <Stat><b>≤8h</b>Response Time</Stat>
            <Stat $center><b>90.0%</b>On-time delivery rate</Stat>
          </Stats>
          <CompanyButtons>
            <button type="button">Company profile</button>
            <button type="button">More products</button>
          </CompanyButtons>
        </Company>
        <ShotRule />
      </Shot>
    </Photo>
  );
}

export default function App() {
  return (
    <Screen>
      <GlobalStyle />
      <StatusBar>
        <Clock>3:09</Clock>
        <StatusIcons>
          <svg width="32" height="32" viewBox="0 0 32 32" fill="#6c7073">
            <path d="M22 5L27 10L11 26C9 27.500 6 28.500 4.500 28L4 27.500C4 25 5 23 6.500 21ZM23.500 3.500L26 1C28 .5 31 3.500 31 6L28.500 8.500Z" />
            <circle cx="2.500" cy="29.500" r="2" />
          </svg>
          <svg width="38" height="32" viewBox="0 0 38 32" fill="none" stroke="#fff" strokeWidth="3" strokeLinecap="round">
            <path d="M2 9C9 2 19 1 26 5M6 15C11 9 19 8 25 13M11 20C15 16 19 16 23 20M35 2C29 5 28 8 28.500 11" />
            <circle cx="32" cy="11" r="3.500" strokeWidth="2.500" />
            <circle cx="17" cy="25" r="2.500" fill="#fff" stroke="none" />
          </svg>
          <svg width="34" height="30" viewBox="-6 0 34 30">
            <g fill="#fff">
              <rect x="0" y="23" width="4" height="7" rx="1" />
              <rect x="6" y="17" width="4" height="13" rx="1" />
            </g>
            <g fill="#5f6366">
              <rect x="12" y="11" width="4" height="19" rx="1" />
              <rect x="18" y="6" width="4" height="24" rx="1" />
              <rect x="24" y="0" width="4" height="30" rx="1" />
            </g>
          </svg>
          <Battery>43</Battery>
        </StatusIcons>
      </StatusBar>

      <Header>
        <IconButton $w={60} aria-label="Back">
          <svg width="60" height="60" viewBox="0 0 60 60" fill="none" stroke="currentColor" strokeWidth="5">
            <path d="M53 30H10M31 9L10 30L31 51" />
          </svg>
        </IconButton>
        <Avatar>R</Avatar>
        <Title>+86 187 0672 4894</Title>
        <HeaderActions>
          <IconButton $w={60} aria-label="Call">
            <svg width="60" height="60" viewBox="0 0 60 60" fill="none" stroke="currentColor" strokeWidth="5" strokeLinejoin="round">
              <path d="M8 7H18.500L21.500 19L13 27.500C18 37 24 43 33 47.500L41 38.500L53 41.500V53C28 53 8 33 8 7Z" />
            </svg>
          </IconButton>
          <IconButton $w={40} aria-label="Call options">
            <svg width="24" height="16" viewBox="0 0 24 16" fill="currentColor">
              <path d="M3 1H21C23.500 1 24 4 22.500 5.500L14 14C12.800 15.200 11.200 15.200 10 14L1.500 5.500C0 4 .5 1 3 1Z" />
            </svg>
          </IconButton>
          <IconButton $w={40} aria-label="More options">
            <svg width="12" height="46" viewBox="0 0 12 46" fill="currentColor">
              <circle cx="6" cy="6" r="6" />
              <circle cx="6" cy="23" r="6" />
              <circle cx="6" cy="40" r="6" />
            </svg>
          </IconButton>
        </HeaderActions>
      </Header>

      <Chat>
        <Wallpaper />
        <DateChip $floating>May 28, 2025</DateChip>
        <MessageList>
          <CutBubble $from="me">
            <CutPreview>
              <CutDot />
              <Meta $place="inline"><time>8:15 PM</time></Meta>
            </CutPreview>
          </CutBubble>
          <Message text="Stop selling these" time="8:15 PM" tail />
          <Message text="Not sure why you think this is a joke" time="11:13 PM" place="below" />
          <DateChip>May 29, 2025</DateChip>
          <Message
            from="them"
            text={"As the design is some American customer send to us, we don’t know,\nalso we are improving to decrease to sell it"}
            time="1:33 AM"
            tail
            place="overlap"
          />
          <Gap />
          <Message text="Show me who asked you to make it" time="3:26 AM" tail place="below" />
          <Message text="That's a felony" time="3:27 AM" />
          <Message text="Stop selling our straw toppers" time="4:50 AM" />
          <PhotoRow>
            <ForwardButton aria-label="Forward">
              <svg width="58" height="42" viewBox="0 0 58 42" fill="none" stroke="#fff" strokeWidth="5" strokeLinecap="round" strokeLinejoin="round">
                <path d="M4 38V30C4 22 9 18 17 18H40M27 5L40 18L27 31M41 5L54 18L41 31" />
              </svg>
            </ForwardButton>
            <PhotoBubble><SharedScreenshot /></PhotoBubble>
          </PhotoRow>
        </MessageList>
        <ScrollThumb />
        <JumpButton aria-label="Jump to latest">
          <svg width="34" height="38" viewBox="0 0 34 38" fill="none" stroke="#949c9f" strokeWidth="5" strokeLinecap="round" strokeLinejoin="round">
            <path d="M4 4L17 17L30 4M4 21L17 34L30 21" />
          </svg>
        </JumpButton>
        <Composer>
          <ComposerField>
            <IconButton type="button" $w={58} aria-label="Stickers">
              <svg width="58" height="58" viewBox="0 0 58 58" fill="none" stroke="currentColor" strokeWidth="5" strokeLinejoin="round">
                <path d="M20 3.500H38C48 3.500 54.500 10 54.500 20V33C54.500 38 38 54.500 33 54.500H20C10 54.500 3.500 48 3.500 38V20C3.500 10 10 3.500 20 3.500Z" />
                <path d="M33 54V43C33 36 37 33.500 43 33.500H54" strokeWidth="4" />
                <path d="M17 34C24 35 34 35 40 31C38 38 34 43 30 44C23 43 19 39 17 34Z" fill="currentColor" stroke="none" />
                <circle cx="19.500" cy="22" r="4.500" fill="currentColor" stroke="none" />
                <circle cx="39.500" cy="22" r="4.500" fill="currentColor" stroke="none" />
              </svg>
            </IconButton>
            <ComposerInput aria-label="Message" placeholder="Message" />
            <IconButton type="button" $w={58} aria-label="Attach">
              <svg width="36" height="58" viewBox="0 0 36 58" fill="none" stroke="currentColor" strokeWidth="5" strokeLinecap="round">
                <path d="M33 15V39C33 61 3 61 3 39V14C3 -1 23 -1 23 14V38C23 45 13 45 13 38V15" />
              </svg>
            </IconButton>
            <IconButton type="button" $w={58} aria-label="Camera">
              <svg width="58" height="52" viewBox="0 0 58 52" fill="none" stroke="currentColor" strokeWidth="5" strokeLinejoin="round">
                <path d="M3.500 9H17L22 3.500H36L41 9H54.500V48.500H3.500Z" />
                <circle cx="29" cy="28.500" r="10" strokeWidth="6" />
              </svg>
            </IconButton>
          </ComposerField>
          <MicButton type="button" aria-label="Record voice message">
            <svg width="40" height="56" viewBox="0 0 40 56" fill="none" stroke="currentColor" strokeWidth="5" strokeLinecap="round">
              <rect x="11.500" y="1" width="17" height="35" rx="8.500" fill="currentColor" stroke="none" />
              <path d="M3 29C4 50 36 50 37 29M20 46V53" />
            </svg>
          </MicButton>
        </Composer>
      </Chat>

      <SystemNav>
        <IconButton $w={60} aria-label="Recent apps">
          <svg width="40" height="44" viewBox="0 0 40 44" fill="none" stroke="currentColor" strokeWidth="4" strokeLinecap="round">
            <path d="M2 3V41M20 3V41M38 3V41" />
          </svg>
        </IconButton>
        <IconButton $w={60} aria-label="Home">
          <svg width="46" height="46" viewBox="0 0 46 46" fill="none" stroke="currentColor" strokeWidth="4">
            <rect x="2" y="2" width="42" height="42" rx="14" />
          </svg>
        </IconButton>
        <IconButton $w={60} aria-label="Back">
          <svg width="30" height="46" viewBox="0 0 30 46" fill="none" stroke="currentColor" strokeWidth="4" strokeLinecap="round" strokeLinejoin="round">
            <path d="M27 3L4 23L27 43" />
          </svg>
        </IconButton>
      </SystemNav>
    </Screen>
  );
}
